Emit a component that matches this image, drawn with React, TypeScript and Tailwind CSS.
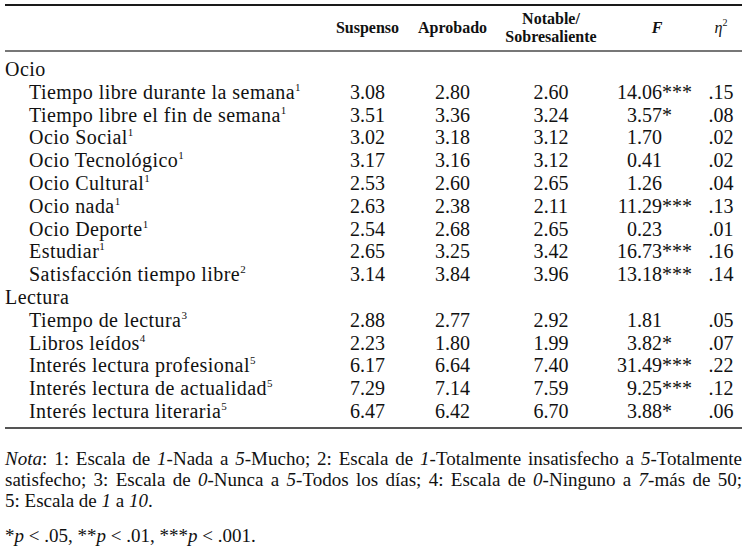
type Row = {
  label: string;
  sup: string;
  s: string;
  a: string;
  n: string;
  f: string;
  stars: string;
  eta: string;
};

const ocio: Row[] = [
  { label: "Tiempo libre durante la semana", sup: "1", s: "3.08", a: "2.80", n: "2.60", f: "14.06", stars: "***", eta: ".15" },
  { label: "Tiempo libre el fin de semana", sup: "1", s: "3.51", a: "3.36", n: "3.24", f: "3.57", stars: "*", eta: ".08" },
  { label: "Ocio Social", sup: "1", s: "3.02", a: "3.18", n: "3.12", f: "1.70", stars: "", eta: ".02" },
  { label: "Ocio Tecnológico", sup: "1", s: "3.17", a: "3.16", n: "3.12", f: "0.41", stars: "", eta: ".02" },
  { label: "Ocio Cultural", sup: "1", s: "2.53", a: "2.60", n: "2.65", f: "1.26", stars: "", eta: ".04" },
  { label: "Ocio nada", sup: "1", s: "2.63", a: "2.38", n: "2.11", f: "11.29", stars: "***", eta: ".13" },
  { label: "Ocio Deporte", sup: "1", s: "2.54", a: "2.68", n: "2.65", f: "0.23", stars: "", eta: ".01" },
  { label: "Estudiar", sup: "1", s: "2.65", a: "3.25", n: "3.42", f: "16.73", stars: "***", eta: ".16" },
  { label: "Satisfacción tiempo libre", sup: "2", s: "3.14", a: "3.84", n: "3.96", f: "13.18", stars: "***", eta: ".14" },
];

const lectura: Row[] = [
  { label: "Tiempo de lectura", sup: "3", s: "2.88", a: "2.77", n: "2.92", f: "1.81", stars: "", eta: ".05" },
  { label: "Libros leídos", sup: "4", s: "2.23", a: "1.80", n: "1.99", f: "3.82", stars: "*", eta: ".07" },
  { label: "Interés lectura profesional", sup: "5", s: "6.17", a: "6.64", n: "7.40", f: "31.49", stars: "***", eta: ".22" },
  { label: "Interés lectura de actualidad", sup: "5", s: "7.29", a: "7.14", n: "7.59", f: "9.25", stars: "***", eta: ".12" },
  { label: "Interés lectura literaria", sup: "5", s: "6.47", a: "6.42", n: "6.70", f: "3.88", stars: "*", eta: ".06" },
];

const cols = "grid grid-cols-[325px_75px_95px_102px_98px_42px]";
const ff = "font-['Liberation_Serif']";

function DataRow({ r }: { r: Row }) {
  return (
    <div className={`${cols} h-[22.8px] leading-[22.8px] text-[20px]`}>
      <div className="pl-[24px] whitespace-nowrap tracking-[0.45px] font-['Liberation_Serif']">
        {r.label}
        <sup className="text-[11px] -top-[8px] tracking-normal font-['Liberation_Serif']">{r.sup}</sup>
      </div>
      <div className="text-center font-['Liberation_Serif']">{r.s}</div>
      <div className="text-center font-['Liberation_Serif']">{r.a}</div>
      <div className="text-center font-['Liberation_Serif']">{r.n}</div>
      <div className="flex font-['Liberation_Serif']">
        <span className="w-[60px] text-right">{r.f}</span>
        <span>{r.stars}</span>
      </div>
      <div className="text-center font-['Liberation_Serif']">{r.eta}</div>
    </div>
  );
}

function Section({ title, rows }: { title: string; rows: Row[] }) {
  return (
    <>
      <div className="h-[22.8px] leading-[22.8px] text-[20px] tracking-[0.45px] font-['Liberation_Serif']">{title}</div>
      {rows.map((r) => (
        <DataRow key={r.label} r={r} />
      ))}
    </>
  );
}

export default function App() {
  return (
    <div className={`w-[752px] h-[555px] bg-white text-[#111] pl-[5px] pr-[10px] pt-[4px] ${ff}`}>
      {/* tabla */}
      <div className="w-[737px]">
        <div className={`${cols} h-[48px] items-center border-t-2 border-b-2 border-t-[#1a1a1a] border-b-[#777] text-[16px] leading-[18.3px] font-bold font-['Liberation_Serif']`}>
          <div />
          <div className="text-center">Suspenso</div>
          <div className="text-center">Aprobado</div>
          <div className="text-center">
            Notable/
            <br />
            Sobresaliente
          </div>
          <div className="text-center pl-3 italic">F</div>
          <div className="text-center font-normal italic">
            η<sup className="text-[10px] not-italic -top-[7px]">2</sup>
          </div>
        </div>
        <div className="pt-[6px] pb-[4px] border-b-2 border-[#555]">
          <Section title="Ocio" rows={ocio} />
          <Section title="Lectura" rows={lectura} />
        </div>
      </div>

      {/* notas */}
      <div className="mt-[19px] text-[19px] leading-[21.3px] w-[737px] font-['Liberation_Serif']">
        <div className="text-justify [text-align-last:justify] whitespace-nowrap">
          <i>Nota</i>: 1: Escala de <i>1</i>-Nada a <i>5</i>-Mucho; 2: Escala de <i>1</i>-Totalmente insatisfecho a <i>5</i>-Totalmente
        </div>
        <div className="text-justify [text-align-last:justify] whitespace-nowrap">
          satisfecho; 3: Escala de <i>0</i>-Nunca a <i>5</i>-Todos los días; 4: Escala de <i>0</i>-Ninguno a <i>7</i>-más de 50;
        </div>
        <div>
          5: Escala de <i>1</i> a <i>10</i>.
        </div>
        <div className="mt-[13px]">
          *<i>p</i> &lt; .05, **<i>p</i> &lt; .01, ***<i>p</i> &lt; .001.
        </div>
      </div>
    </div>
  );
}
